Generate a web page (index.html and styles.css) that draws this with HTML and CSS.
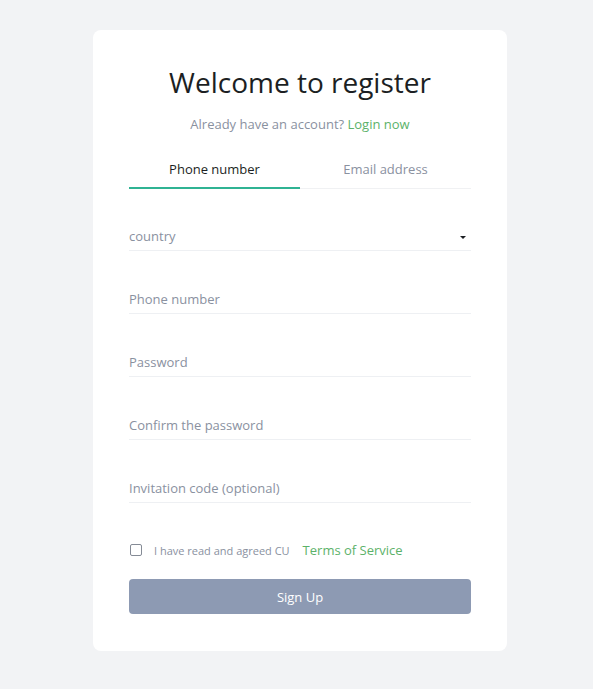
FILE: index.html
```html
<!DOCTYPE html>
<html>
<head>
<meta charset="utf-8">
<link rel="stylesheet" href="styles.css">
</head>
<body>
<div class="page">
  <div class="card">
    <h1 class="title">Welcome to register</h1>
    <p class="sub">Already have an account? <a class="link">Login now</a></p>
    <div class="tabs">
      <div class="tab active">Phone number</div>
      <div class="tab">Email address</div>
    </div>
    <div class="field select"><span class="ph">country</span><span class="caret"></span></div>
    <div class="field"><span class="ph">Phone number</span></div>
    <div class="field"><span class="ph">Password</span></div>
    <div class="field"><span class="ph">Confirm the password</span></div>
    <div class="field"><span class="ph">Invitation code (optional)</span></div>
    <div class="agree">
      <span class="box"></span>
      <span class="agree-text">I have read and agreed CU</span>
      <a class="terms">Terms of Service</a>
    </div>
    <button class="btn">Sign Up</button>
  </div>
</div>
</body>
</html>
```
FILE: styles.css
```css
html, body {
  margin: 0;
  padding: 0;
  background: #f2f3f5;
  font-family: "Open Sans", "Noto Sans", sans-serif;
}
.page {
  display: flex;
  justify-content: center;
  padding: 30px 0 0 7px;
}
.card {
  width: 342px;
  background: #fff;
  border-radius: 8px;
  padding: 0 36px 37px;
}
.title {
  margin: 0;
  padding-top: 32px;
  font-size: 28px;
  font-weight: 400;
  line-height: 40px;
  color: #1c1f23;
  text-align: center;
}
.sub {
  margin: 12px 0 0;
  font-size: 13px;
  line-height: 20px;
  color: #8a919f;
  text-align: center;
}
.link { color: #5cb26a; }
.tabs {
  display: flex;
  margin-top: 18px;
  border-bottom: 1px solid #f0f1f3;
}
.tab {
  flex: 1;
  text-align: center;
  font-size: 13px;
  line-height: 20px;
  padding: 7px 0 8px;
  color: #8a919f;
}
.tab.active {
  color: #1c1f23;
  border-bottom: 2px solid #2fb393;
  margin-bottom: -1px;
}
.field {
  display: flex;
  align-items: center;
  justify-content: space-between;
  height: 32px;
  margin-top: 30px;
  border-bottom: 1px solid #eef0f3;
}
.field.select { margin-top: 29px; }
.ph {
  font-size: 13px;
  color: #8a919f;
  padding-top: 4px;
}
.caret {
  width: 0;
  height: 0;
  border-left: 3px solid transparent;
  border-right: 3px solid transparent;
  border-top: 3px solid #1c1f23;
  margin: 6px 5px 0 0;
}
.agree {
  display: flex;
  align-items: center;
  margin-top: 37px;
  height: 20px;
}
.box {
  width: 10px;
  height: 10px;
  border: 1.5px solid #858b96;
  border-radius: 2px;
  margin-left: 1px;
}
.agree-text {
  font-size: 11px;
  color: #8a919f;
  margin-left: 12px;
}
.terms {
  font-size: 13px;
  color: #5cb26a;
  margin-left: 13px;
}
.btn {
  display: block;
  width: 100%;
  height: 35px;
  margin-top: 19px;
  border: 0;
  border-radius: 4px;
  background: #8d9ab3;
  color: #fff;
  font-family: inherit;
  font-size: 13px;
}
```
